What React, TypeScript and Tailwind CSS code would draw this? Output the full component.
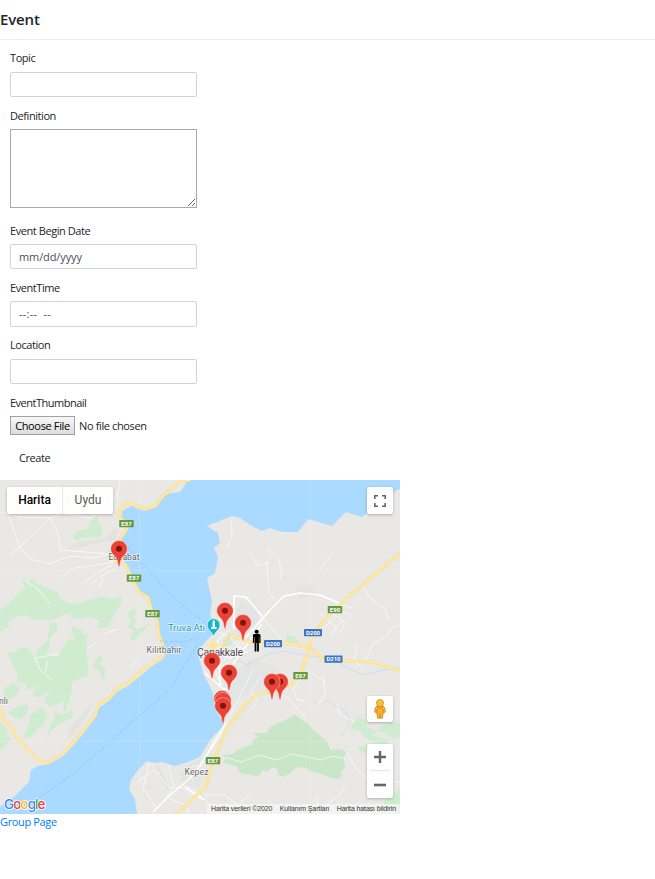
import React from "react";

const labelClass = "block h-[17px] whitespace-nowrap leading-[17px]";
const inputClass =
  "block h-[25px] w-[187px] rounded-[2px] border border-[#ced4da] bg-white px-2 leading-[24px] text-[#495057] outline-none";

const pins: [number, number][] = [
  [119, 87], [225, 149], [243, 161], [212, 199], [229, 211],
  [280, 220], [272, 220], [222, 237], [223, 239], [223, 244],
];

const minorRoads = [
  "M0 32L20 37L50 38L62 33L90 38L108 28L118 12L120 0",
  "M118 12L118 27M20 37L10 8M50 38L58 53L60 70M50 38L30 57L20 67L30 79L50 84M8 35L20 67M60 70L112 74M20 67L11 74",
  "M112 74L92 78L70 76L49 84M112 85L95 94L82 104M116 88L98 98L90 105M114 82L90 86L74 88L62 97M103 98L100 107",
  "M35 178L40 190L52 200M35 178L58 174M48 181L45 192M88 168L96 163M105 153L119 149M130 187L137 181M25 101L37 108L50 124",
  "M212 189L228 183L247 158L272 128L284 116L300 113L320 115L341 124",
  "M233 149L234 116L246 117L261 136L281 159M225 153L214 165L209 175M214 150L230 157L244 171M230 149L217 161L209 179L222 205L228 211",
  "M208 162L238 177L262 164M213 170L230 178L248 171M212 180L238 160M211 190L222 183L243 158",
  "M200 286L216 259L226 243L242 212L253 190M192 287L200 285L226 248",
  "M267 68L279 80L282 94L280 99M267 82L269 113L274 120M251 73L258 86L268 82M231 41L232 55L227 67M334 72L325 83L319 91",
  "M363 106L371 119L385 128L388 140M400 145L393 147L386 157L374 163L364 182",
  "M320 133L337 148L332 157M329 131L345 143L340 153M324 148L335 137M330 154L343 140M336 124L353 128M330 129L349 134",
  "M261 196L251 211L257 221L252 230M300 199L293 209L297 220L305 221M323 196L325 213L318 225M357 165L354 181L364 188M286 216L297 228L306 239M337 224L340 235L355 242M312 193L325 202",
  "M225 277L241 282L259 275L276 280L292 274L307 277L321 280L333 276L346 279M345 270L357 290L374 304L373 318L360 334M367 276L377 291L390 301L400 302",
  "M137 302L154 290L170 308L184 308L200 319M149 283L143 308L157 329M168 284L174 306L164 321",
  "M180 302L200 316L222 334M182 291L194 300M168 318L185 325L190 334M205 315L225 315L238 325L249 315M316 315L320 330M250 324L256 331M345 305L339 316L320 329",
];

const goldRoads = [
  "M190 0L180 1L173 8L163 16L156 25L145 29L136 25L127 23L120 28L119 37L128 45L126 50L120 59L119 78L114 80L119 84L126 85L132 99L139 112L148 117L152 132L157 140L159 155L163 165L163 176L151 184L139 193L129 203L117 208L109 219L99 223L95 236L84 250L72 264L62 275L48 282L40 281L29 271L15 255L11 246L4 240L0 228",
  "M230 155L252 162L286 163L309 167L323 179L350 181L373 182L400 191",
  "M309 167L304 183L302 193L290 205L272 211L257 214L246 224L226 250L218 270L211 289L206 306L199 313L176 334",
  "M309 167L312 155L327 137L347 118L373 96L400 73",
];

const greenAreas = [
  "M73 56L79 50L88 49L91 40L97 36L99 43L103 50L100 57L91 57L82 58L76 60Z",
  "M0 130L7 125L15 117L25 108L22 98L27 101L32 99L37 104L48 108L57 112L60 118L70 124L80 123L91 119L102 117L112 119L122 117L121 123L115 133L107 148L97 148L100 140L87 137L78 139L70 137L72 132L63 135L53 140L33 140L25 135L15 137L7 142L10 145L0 152Z",
  "M50 143L57 143L57 151L50 157L49 167L47 175L58 177L63 167L68 160L75 159L71 152L72 146L82 150L83 155L88 154L86 167L89 195L72 202L72 210L69 222L63 235L64 221L50 227L44 220L50 211L37 218L32 213L40 205L27 210L25 203L17 202L17 193L12 183L7 172L16 172L22 167L30 170L35 180L36 172L47 160Z",
  "M5 208L13 203L20 208L17 215L3 222Z",
  "M8 233L20 225L28 225L28 233L20 240Z",
  "M30 235L42 227L48 235L43 245L36 250L30 258L22 257L28 249Z",
  "M53 232L63 235L72 230L73 238L60 243L50 252L46 260L50 247L54 239Z",
  "M130 131L137 128L134 138L137 142L134 145L137 149L150 143L140 155L132 162L130 157L134 151L127 147L132 140L127 135Z",
  "M95 180L103 173L101 184L106 191L104 200L98 190L93 188Z",
  "M0 241L8 250L6 257L12 258L0 271Z",
  "M357 237L366 240L367 247L378 252L372 255L388 260L382 266L366 258L360 251L350 249Z",
  "M380 247L391 242L400 243L400 256L394 259L385 253L377 251Z",
  "M378 262L389 259L387 268L379 274L371 271L361 273L357 267Z",
  "M384 321L400 309L400 334L385 330Z",
  "M223 161L229 156L233 166L225 167Z",
  "M286 155L295 157L299 162L288 164Z",
  "M105 73L111 69L114 79L107 77Z",
  "M179 293L184 290L184 296Z",
];

function Shield({ x, y, text, blue = false }: { x: number; y: number; text: string; blue?: boolean }) {
  const w = blue ? 18 : 14.5;
  return (
    <g>
      <rect x={x - w / 2} y={y - 3.5} width={w} height={7.2} rx={0.6} fill={blue ? "#3c75c6" : "#659b3e"} />
      <text x={x} y={y + 2.3} textAnchor="middle" fill="#fff" fontSize="6" fontWeight="700" textLength={blue ? 14 : 10.5}>{text}</text>
    </g>
  );
}

function MapCanvas() {
  return (
    <svg className="block h-[334px] w-[400px]" viewBox="0 0 400 334" fontFamily="Roboto, sans-serif">
      <rect width="400" height="334" fill="#e9e8e4" />
      <path d="M242 119L260 133L255 151L232 166L232 140Z M250 180L274 185L287 201L282 217L250 211L234 223L220 208L237 191Z M294 108L312 105L318 115L300 119Z M185 286L200 279L200 307L179 305Z" fill="#e3e4e4" />
      <path d="M223 275L232 274L242 268L253 264L252 260L259 257L252 253L267 253L270 247L277 244L283 241L295 235L302 240L308 243L315 252L327 261L330 270L338 269L348 271L344 276L345 288L341 291L341 298L333 299L322 294L313 292L305 288L297 287L290 293L283 297L278 295L278 290L273 287L267 292L263 290L258 297L252 295L240 293L236 286L223 283L226 279Z" fill="#c9e6c9" />
      {greenAreas.map((d) => <path key={d} d={d} fill="#cfecd0" />)}
      <path d="M66 69L82 61L104 59L118 47L116 60L100 62L83 67ZM65 262L71 247L85 231L93 222L86 237L76 250Z" fill="#e2e2df" />
      <path d="M188 0L180 12L166 14L157 27L144 31L131 26L122 31L122 39L129 48L121 60L122 78L129 88L132 99L140 112L147 116L153 131L159 143L160 156L166 173L163 179L151 187L139 197L128 206L117 212L110 220L99 228L95 238L84 253L72 267L62 277L49 284L38 286L31 290L29 302L15 316L0 327L0 334L137 334L135 319L129 310L131 300L138 290L147 281L155 283L161 282L175 286L188 282L200 277L210 260L224 245L215 227L213 213L203 193L199 178L200 168L207 160L212 155L213 141L210 135L212 121L207 98L215 93L218 77L214 68L220 63L218 53L207 46L222 40L232 36L240 38L252 46L262 51L270 48L282 52L298 52L308 39L332 46L346 32L362 37L382 22L397 10L400 9L400 0Z" fill="#aadaff" />
      <path d="M139.5 0V334M310.5 0V334M0 90.5H400M0 261.5H400" stroke="#fff" strokeOpacity=".15" fill="none" strokeWidth="1" />
      <path d="M233 178L247 185L266 175L284 171L298 174L317 177L335 181L352 190L364 195L379 191L400 188M157 285L164 299L168 310M341 256L351 242L345 231L326 220" stroke="#b8dcf0" strokeWidth=".7" fill="none" />
      {minorRoads.map((d) => <path key={d} d={d} fill="none" stroke="#fff" strokeOpacity=".8" strokeWidth=".8" strokeLinejoin="round" />)}
      <g stroke="#fff" fill="none" strokeLinejoin="round">
        <path d="M153 332L169 316L189 299L200 286L226 243M205 193L222 208L230 211M218 160L220 207M230 188L262 144M244 159L272 128L284 116L300 113L320 115L341 124M234 150L234 116L246 117L262 136M185 307L204 320" strokeWidth="1.5" />
      </g>
      <path d="M205 165L212 160L219 163L218 171L211 171Z" fill="#fbe6ac" />
      {goldRoads.map((d) => (
        <g key={d} fill="none" strokeLinecap="round" strokeLinejoin="round">
          <path d={d} stroke="#f5db8c" strokeWidth="3" />
          <path d={d} stroke="#ffe9a6" strokeWidth="1.9" />
        </g>
      ))}
      <path d="M221 170L230 155" stroke="#f8df93" strokeWidth="2" />
      <path d="M128 67L145 87L168 112L190 132L212 147M160 161L184 162L200 157M197 165L183 187L172 207L151 226L126 247L104 267L72 295L43 315L18 334" fill="none" stroke="#8fb8dc" strokeWidth=".6" strokeDasharray="3 2" />
      <Shield x={126.5} y={43.5} text="E87" /><Shield x={134} y={98} text="E87" />
      <Shield x={152.5} y={133.5} text="E87" /><Shield x={335} y={129.5} text="E90" />
      <Shield x={300.5} y={195.5} text="E87" /><Shield x={213} y={280.5} text="E87" />
      <Shield x={313} y={152.5} text="D200" blue /><Shield x={273} y={163.5} text="D200" blue />
      <Shield x={333.5} y={179} text="D210" blue />
      <g fill="#666" stroke="#fff" strokeWidth="1.5" strokeOpacity=".7" paintOrder="stroke" fontSize="8.7">
        <text x="108.5" y="79.5" textLength="31">Eceabat</text>
        <text x="146.5" y="173" textLength="35">Kilitbahir</text>
        <text x="184.5" y="295" textLength="24">Kepez</text>
        <text x="-1" y="223.5" textLength="9">nlı</text>
        <text x="197" y="176" fontSize="10.5" fill="#4d4554" textLength="46">Çanakkale</text>
        <text x="168" y="151.3" fontSize="9.7" fill="#2a9ba9" textLength="37">Truva Atı</text>
      </g>
      <path d="M213.5 157C212 151 207.2 150 207.2 145A6.4 6.4 0 0 1 220 145C220 150 215 151 213.5 157Z" fill="#12b5cb" stroke="#fff" strokeWidth=".6" />
      <path d="M213.7 139.5L215 142V147H216.5V149H211V147H212.5V142Z" fill="#fff" />
      {pins.map(([x, y]) => (
        <g key={`${x}-${y}`} transform={`translate(${x} ${y})`}>
          <path d="M0 0C-.9 0-.8-4-2.1-7.5C-3.8-11.5-8.3-13-8.3-18.2A8.3 8.3 0 0 1 8.3-18.2C8.3-13 3.8-11.5 2.1-7.5C.8-4 .9 0 0 0Z" fill="#ea4335" stroke="#fff" strokeOpacity=".65" strokeWidth=".6" />
          <circle cy="-18.2" r="3" fill="#811411" />
        </g>
      ))}
      <g fill="#000">
        <circle cx="256.7" cy="151.7" r="2" />
        <path d="M254.2 154H259.2Q260.5 154 260.5 155.5V163H259.2V157H258.9V171.5H257.1V163H256.4V171.5H254.6V157H254.2V163H252.9V155.5Q252.9 154 254.2 154Z" />
      </g>
      <text x="4" y="329" fontFamily="Inter, sans-serif" fontSize="13.5" fontWeight="500" stroke="#fff" strokeWidth="1.5" paintOrder="stroke" textLength="41.5">
        <tspan fill="#4285f4">G</tspan><tspan fill="#ea4335">o</tspan><tspan fill="#fbbc05">o</tspan><tspan fill="#4285f4">g</tspan><tspan fill="#34a853">l</tspan><tspan fill="#ea4335">e</tspan>
      </text>
    </svg>
  );
}

export default function App() {
  return (
    <main className="h-[879px] w-[655px] bg-white font-['Open_Sans','Noto_Sans',sans-serif] text-[11px] tracking-[-0.43px] text-[#212529]">
      <header className="h-10 border-b border-[#efefef]">
        <h1 className="pt-2 text-[15px] leading-[22px] font-semibold tracking-[-0.15px]">Event</h1>
      </header>
      <form className="h-[440px] w-[210px] pt-[9px] pl-[10px]" onSubmit={(e) => e.preventDefault()}>
        <label className="block h-[57px]">
          <span className={labelClass}>Topic</span>
          <input className={`${inputClass} mt-[6px]`} />
        </label>
        <label className="block h-[115px]">
          <span className={`${labelClass} pt-px`}>Definition</span>
          <textarea className="mt-[6px] block h-[79px] w-[187px] resize border border-[#a9a9a9] bg-white outline-none" />
        </label>
        <label className="block h-[57px]">
          <span className={`${labelClass} pt-px`}>Event Begin Date</span>
          <div className={`${inputClass} mt-[6px] tracking-[-0.1px]`}>mm/dd/yyyy</div>
        </label>
        <label className="block h-[57px]">
          <span className={`${labelClass} pt-px`}>EventTime</span>
          <div className={`${inputClass} mt-[6px] h-[26px] tracking-[0.25px]`}>--:--&nbsp; --</div>
        </label>
        <label className="block h-[58px]">
          <span className={`${labelClass} pt-px`}>Location</span>
          <input className={`${inputClass} mt-[7px]`} />
        </label>
        <div>
          <span className={`${labelClass} pt-px tracking-[-0.5px]`}>EventThumbnail</span>
          <div className="mt-[6px] flex h-[19px] items-center">
            <button type="button" className="h-[19px] w-[65px] border border-[#a0a0a0] bg-linear-to-b from-[#f8f8f8] to-[#dddddd] text-center leading-[17px] tracking-[-0.35px] whitespace-nowrap text-black">Choose File</button>
            <span className="ml-[4px] pt-px tracking-[-0.37px] whitespace-nowrap">No file chosen</span>
          </div>
        </div>
        <button className="mt-[14px] ml-[9px] block leading-[17px]">Create</button>
      </form>
      <section className="relative h-[334px] w-[400px] overflow-hidden font-[Roboto,sans-serif] tracking-normal">
        <MapCanvas />
        <div className="absolute top-[7px] left-[7px] flex h-[27px] w-[106px] rounded-[2px] bg-white text-[12px] shadow-[0_1px_3px_rgba(0,0,0,0.25)]">
          <button className="w-14 border-r border-[#e6e6e6] pb-[2px] font-medium text-black">Harita</button>
          <button className="w-[50px] pb-[2px] text-[#565656]">Uydu</button>
        </div>
        <button aria-label="Fullscreen" className="absolute top-[7px] right-[7px] flex h-[27px] w-[26px] items-center justify-center rounded-[2px] bg-white shadow-[0_1px_3px_rgba(0,0,0,0.25)]">
          <svg className="h-3 w-3" viewBox="0 0 12 12"><path d="M.8 4V.8H4M8 .8h3.2V4M11.2 8v3.2H8M4 11.2H.8V8" fill="none" stroke="#666" strokeWidth="1.6" /></svg>
        </button>
        <button aria-label="Street View" className="absolute right-[7px] bottom-[92px] flex h-[26px] w-[26px] items-center justify-center rounded-[2px] bg-white shadow-[0_1px_3px_rgba(0,0,0,0.25)]">
          <svg className="h-5 w-3" viewBox="0 0 12 20"><path d="M3 7Q.5 8 .7 13L2.8 14.2L3.5 19.2H8.5L9.2 14.2L11.3 13Q11.5 8 9 7Z" fill="#fab52a" stroke="#b88627" strokeWidth=".7" /><circle cx="6" cy="4" r="3.6" fill="#fbbf2c" stroke="#b88627" strokeWidth=".6" /><path d="M3 7.5L6 10L9 7.5M6 14V19M3 10V14M9 10V14" fill="none" stroke="#d97b25" strokeWidth=".9" /></svg>
        </button>
        <div className="absolute right-[7px] bottom-4 flex h-[54px] w-[26px] flex-col items-center rounded-[2px] bg-white shadow-[0_1px_3px_rgba(0,0,0,0.25)]">
          <button aria-label="Zoom in" className="flex h-[27px] w-5 items-center justify-center border-b border-[#e6e6e6]"><svg className="h-3 w-3" viewBox="0 0 12 12"><path d="M6 0V12M0 6H12" stroke="#666" strokeWidth="2.4" /></svg></button>
          <button aria-label="Zoom out" className="flex h-[27px] w-5 items-center justify-center"><svg className="h-3 w-3" viewBox="0 0 12 12"><path d="M0 6H12" stroke="#666" strokeWidth="2.6" /></svg></button>
        </div>
        <div className="absolute right-0 bottom-0 flex h-[10px] w-[193px] items-center justify-between bg-[#f5f5f5]/80 pr-1 pl-[4px] font-['Liberation_Sans',sans-serif] text-[7px] leading-[10px] tracking-[-0.12px] whitespace-nowrap text-[#333]">
          <span>Harita verileri ©2020</span><span>Kullanım Şartları</span><span>Harita hatası bildirin</span>
        </div>
      </section>
      <a href="#" className="block w-fit leading-[16px] tracking-[-0.35px] text-[#007bff]">Group Page</a>
    </main>
  );
}
